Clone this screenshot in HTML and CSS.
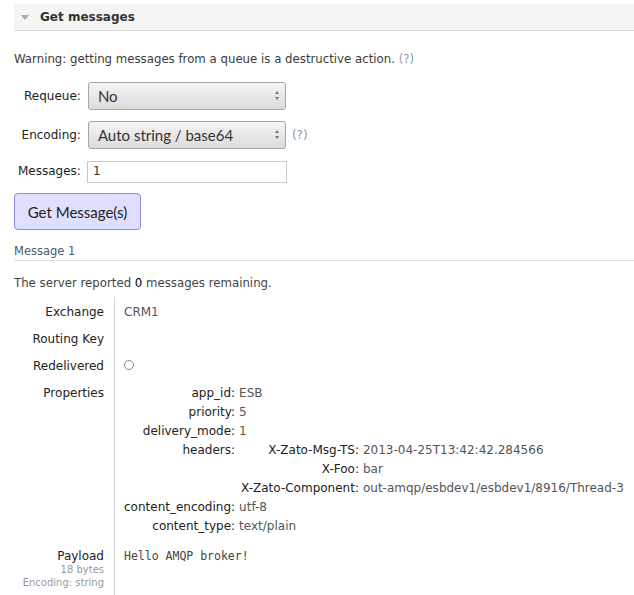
FILE: index.html
```html
<!DOCTYPE html>
<html>
<head>
<meta charset="utf-8">
<link rel="stylesheet" href="styles.css">
</head>
<body>
<div class="page">
  <div class="section-head">
    <span class="tri"></span>
    <span class="section-title">Get messages</span>
  </div>

  <p class="warning">Warning: getting messages from a queue is a destructive action. <span class="help">(?)</span></p>

  <table class="form">
    <tr class="row-select">
      <td class="flabel">Requeue:</td>
      <td><div class="select"><span>No</span><span class="arrows"><i class="up"></i><i class="down"></i></span></div></td>
    </tr>
    <tr class="row-select">
      <td class="flabel">Encoding:</td>
      <td><div class="select"><span>Auto string / base64</span><span class="arrows"><i class="up"></i><i class="down"></i></span></div><span class="help side">(?)</span></td>
    </tr>
    <tr class="row-input">
      <td class="flabel">Messages:</td>
      <td><div class="input">1</div></td>
    </tr>
  </table>

  <button class="btn">Get Message(s)</button>

  <div class="msg-title">Message 1</div>

  <p class="remaining">The server reported <b>0</b> messages remaining.</p>

  <table class="details">
    <tr>
      <td class="dlabel">Exchange</td>
      <td class="dval">CRM1</td>
    </tr>
    <tr>
      <td class="dlabel">Routing Key</td>
      <td class="dval"></td>
    </tr>
    <tr>
      <td class="dlabel">Redelivered</td>
      <td class="dval"><span class="radio"></span></td>
    </tr>
    <tr>
      <td class="dlabel">Properties</td>
      <td class="dval">
        <table class="props">
          <tr><td class="pk">app_id:</td><td class="pv">ESB</td></tr>
          <tr><td class="pk">priority:</td><td class="pv">5</td></tr>
          <tr><td class="pk">delivery_mode:</td><td class="pv">1</td></tr>
          <tr><td class="pk">headers:</td><td class="pv">
            <table class="hdrs">
              <tr><td class="hk">X-Zato-Msg-TS:</td><td class="pv">2013-04-25T13:42:42.284566</td></tr>
              <tr><td class="hk">X-Foo:</td><td class="pv">bar</td></tr>
              <tr><td class="hk">X-Zato-Component:</td><td class="pv">out-amqp/esbdev1/esbdev1/8916/Thread-3</td></tr>
            </table>
          </td></tr>
          <tr><td class="pk">content_encoding:</td><td class="pv">utf-8</td></tr>
          <tr><td class="pk">content_type:</td><td class="pv">text/plain</td></tr>
        </table>
      </td>
    </tr>
    <tr class="payload-row">
      <td class="dlabel">Payload<div class="sub">18 bytes</div><div class="sub">Encoding: string</div></td>
      <td class="dval"><pre class="payload">Hello AMQP broker!</pre></td>
    </tr>
  </table>
</div>
</body>
</html>
```

FILE: styles.css
```css
html, body {
  margin: 0;
  padding: 0;
  background: #fff;
}
body {
  font-family: "DejaVu Sans", Verdana, sans-serif;
  font-size: 12px;
  color: #333;
}
.page {
  padding: 4px 0 0 14px;
}
.section-head {
  height: 26px;
  background: #f5f5f5;
  border-bottom: 1px solid #dddddd;
  display: flex;
  align-items: center;
}
.tri {
  width: 0;
  height: 0;
  margin-left: 7px;
  margin-right: 11px;
  border-left: 4px solid transparent;
  border-right: 4px solid transparent;
  border-top: 5px solid #aaaaaa;
}
.section-title {
  font-weight: bold;
  font-size: 12px;
  color: #333;
}
.warning {
  margin: 21px 0 0 0;
  line-height: 14px;
  font-size: 11.75px;
  color: #3c3c3c;
}
.help {
  color: #8a9aae;
}
.help.side {
  margin-left: 6px;
  font-size: 12px;
}
.form {
  border-collapse: collapse;
  margin-top: 10px;
}
.form td {
  padding: 0;
  vertical-align: middle;
}
.flabel {
  text-align: right;
  padding: 0 7px 0 4px !important;
  color: #222;
  font-size: 12px;
}
.row-select td {
  height: 39px;
}
.row-select td:last-child {
  display: flex;
  align-items: center;
}
.select {
  box-sizing: border-box;
  width: 198px;
  height: 28px;
  border: 1px solid #a6a6a6;
  border-radius: 3px;
  background: linear-gradient(#f4f4f4, #dcdcdc);
  display: flex;
  align-items: center;
  justify-content: space-between;
  padding: 0 6px 0 9px;
  font-family: Lato, "Open Sans", sans-serif;
  font-size: 15px;
  color: #333;
}
.arrows {
  display: flex;
  flex-direction: column;
  gap: 3px;
}
.arrows i {
  display: block;
  width: 0;
  height: 0;
  border-left: 2.5px solid transparent;
  border-right: 2.5px solid transparent;
}
.arrows .up {
  border-bottom: 3px solid #777;
}
.arrows .down {
  border-top: 3px solid #777;
}
.row-input td {
  height: 32px;
  padding-top: 2px;
}
.input {
  box-sizing: border-box;
  width: 200px;
  height: 22px;
  border: 1px solid #c8c8c8;
  margin-left: -1px;
  padding: 2px 5px;
  font-size: 12px;
  color: #333;
}
.btn {
  display: block;
  margin-top: 5px;
  box-sizing: border-box;
  width: 127px;
  height: 37px;
  background: #dfdfff;
  border: 1px solid #8c8ce0;
  border-radius: 4px;
  font-family: Lato, "Open Sans", sans-serif;
  font-size: 15px;
  color: #222;
  padding: 0;
}
.msg-title {
  margin-top: 14px;
  padding-bottom: 2px;
  border-bottom: 1px solid #e0e0e0;
  color: #4d5c6b;
  font-size: 11.5px;
  line-height: 14px;
}
.remaining {
  margin: 15px 0 0 0;
  line-height: 14px;
  font-size: 11.75px;
  color: #444;
}
.remaining b {
  font-weight: normal;
  color: #000;
}
.details {
  border-collapse: collapse;
  margin-top: 7px;
}
.details > tbody > tr > td {
  vertical-align: top;
  padding: 0;
}
.dlabel {
  width: 90px;
  text-align: right;
  padding-right: 10px !important;
  border-right: 1px solid #d8d8d8;
  color: #222;
  line-height: 27px;
  height: 27px;
}
.details > tbody > tr:first-child > td {
  padding-top: 2px !important;
}
.dval {
  padding-left: 9px !important;
  color: #555;
  line-height: 27px;
}
.radio {
  display: inline-block;
  width: 8px;
  height: 8px;
  border: 1px solid #8a8a8a;
  border-radius: 50%;
  vertical-align: middle;
  margin-top: -3px;
}
.props {
  border-collapse: collapse;
  margin-top: 4px;
}
.props td {
  padding: 0;
  vertical-align: top;
  line-height: 19px;
}
.pk {
  text-align: right;
  color: #222;
  padding-right: 4px !important;
}
.props > tbody > tr > .pk {
  width: 110px;
}
.pv {
  color: #555;
}
.hdrs {
  border-collapse: collapse;
  margin-left: 2px;
}
.hdrs td {
  padding: 0;
  line-height: 19px;
  vertical-align: top;
}
.hk {
  text-align: right;
  color: #222;
  padding-right: 4px !important;
  padding-left: 0;
  white-space: nowrap;
}
.payload-row > td {
  padding-top: 13px !important;
  line-height: 14px;
}
.payload-row .dlabel {
  line-height: 14px;
  height: auto;
  padding-bottom: 8px !important;
}
.sub {
  font-size: 10px;
  color: #999;
  line-height: 13px;
}
.payload {
  margin: 0;
  font-family: "DejaVu Sans Mono", monospace;
  font-size: 11.5px;
  color: #444;
  line-height: 14px;
}
```
